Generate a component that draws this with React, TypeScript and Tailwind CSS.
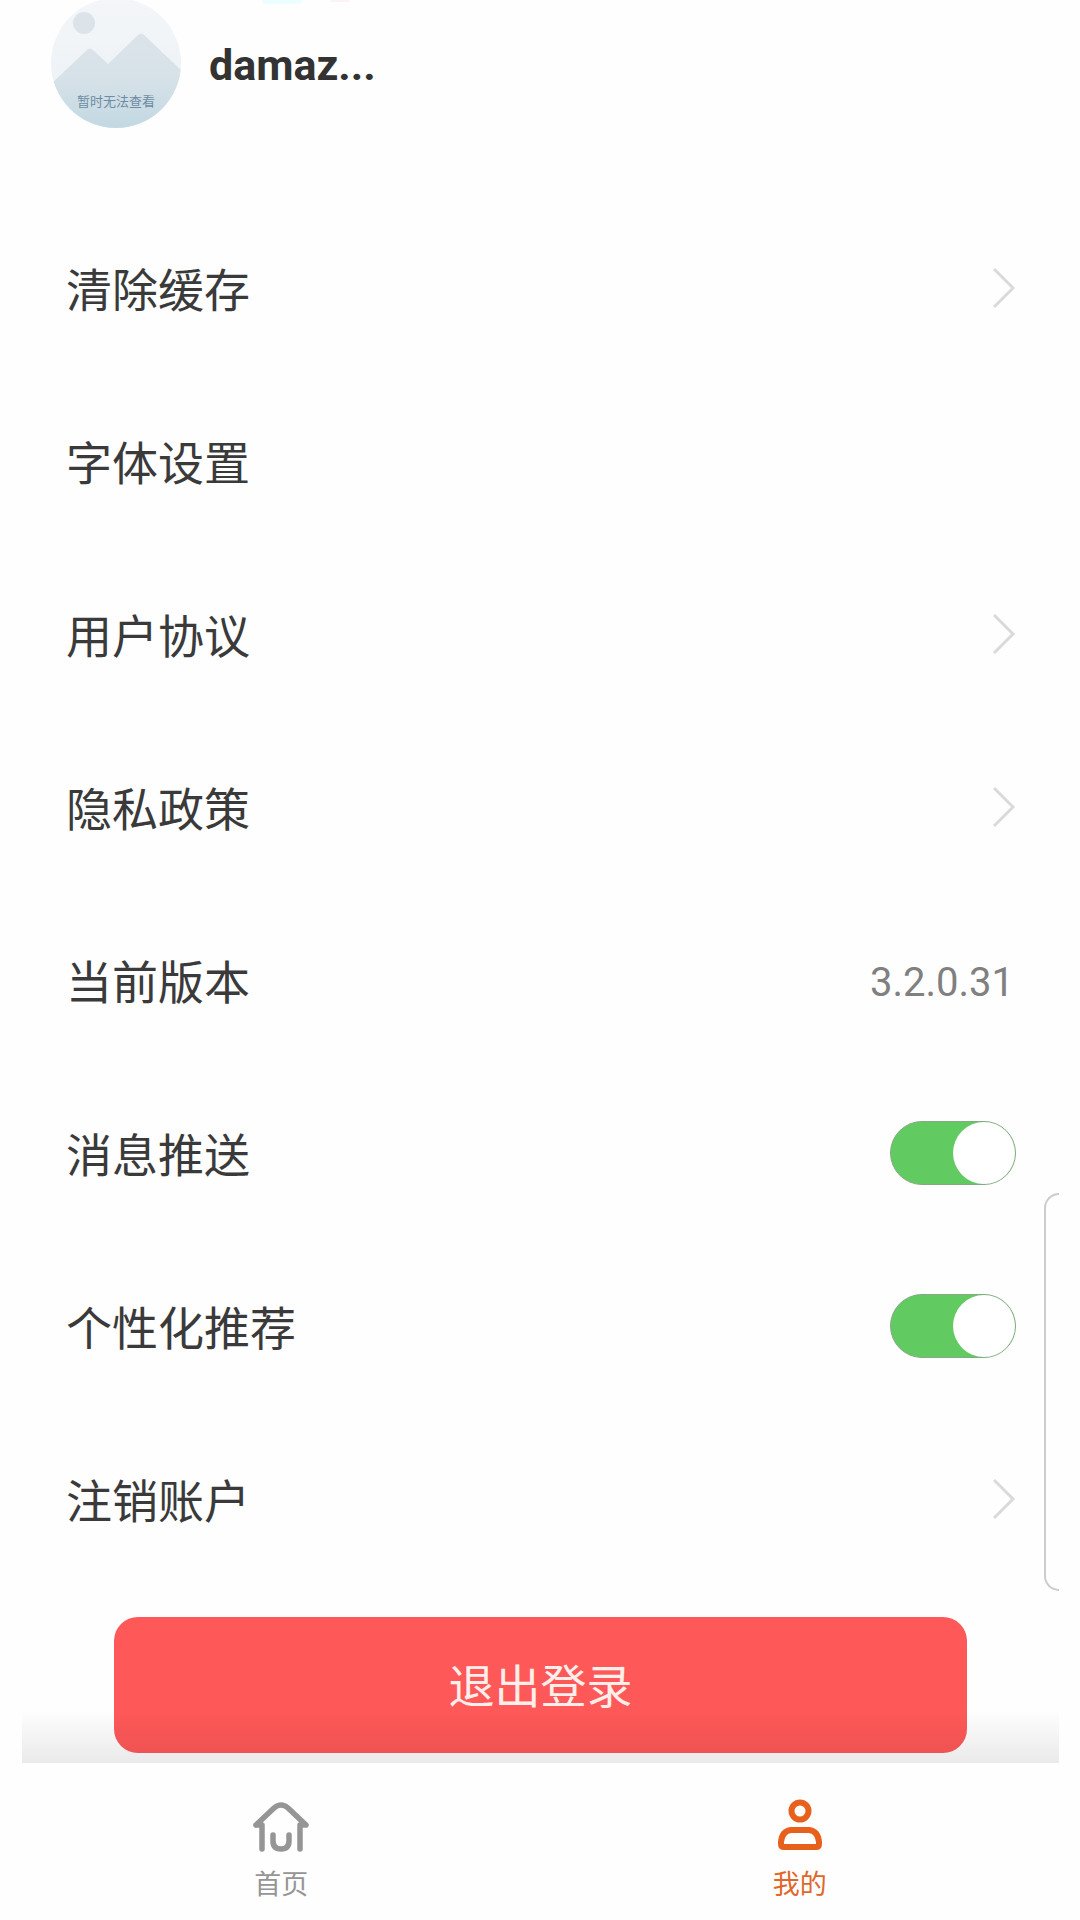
import React, { useState } from 'react';

interface RowProps {
  label: string;
  children?: React.ReactNode;
}

interface SwitchRowProps {
  id: string;
  label: string;
  checked: boolean;
  onChange: (event: React.ChangeEvent<HTMLInputElement>) => void;
}

const rowClass = "flex w-full h-[173px] items-center justify-between text-left text-[46px] leading-[60px] text-[#3a3a3a]";

const Chevron: React.FC = () => (
  <svg className="w-6 h-10" viewBox="0 0 24 40" fill="none" stroke="#dadada" strokeWidth="3" aria-hidden="true">
    <path d="M2 1L21 20L2 39" />
  </svg>
);

const LinkRow: React.FC<RowProps> = ({ label }) => (
  <button type="button" className={rowClass}>
    <span className="pt-1.5">{label}</span>
    <Chevron />
  </button>
);

const InfoRow: React.FC<RowProps> = ({ label, children }) => (
  <div className={rowClass}>
    <span className="pt-1.5">{label}</span>
    {children}
  </div>
);

const SwitchRow: React.FC<SwitchRowProps> = ({ id, label, checked, onChange }) => (
  <div className={rowClass}>
    <label htmlFor={id} className="pt-1.5">{label}</label>
    <input
      id={id}
      type="checkbox"
      role="switch"
      checked={checked}
      onChange={onChange}
      className="flex appearance-none items-center w-[126px] h-16 rounded-full border border-[#86a886] bg-gray-200 checked:bg-[#61cb61] checked:justify-end before:block before:w-[62px] before:h-[62px] before:rounded-full before:bg-white"
    />
  </div>
);

const Avatar: React.FC = () => (
  <div className="relative w-[130px] h-32 shrink-0 overflow-hidden">
    <svg className="w-full h-full" viewBox="0 2 130 128" aria-hidden="true">
      <defs>
        <linearGradient id="sky" x1="0" y1="0" x2="0" y2="1">
          <stop offset="0" stopColor="#f4f6f9" />
          <stop offset="1" stopColor="#eaf1f5" />
        </linearGradient>
        <linearGradient id="hills" x1="0" y1="0" x2="0" y2="1">
          <stop offset="0" stopColor="#dce4ea" />
          <stop offset="0.5" stopColor="#d6e1e8" />
          <stop offset="1" stopColor="#c2d8e2" />
        </linearGradient>
        <clipPath id="round">
          <circle cx="65" cy="65" r="65" />
        </clipPath>
      </defs>
      <g clipPath="url(#round)">
        <rect width="130" height="130" fill="url(#sky)" />
        <circle cx="33" cy="25" r="11" fill="#dce4ea" />
        <path d="M0 86L36 52Q39 49 42 52L57 66L87 37Q90 34 93 37L130 72V130H0Z" fill="url(#hills)" />
      </g>
    </svg>
    <span className="absolute inset-x-0 top-[93px] text-center text-[13px] leading-[18px] text-[#6d8ca3]">暂时无法查看</span>
  </div>
);

const HomeIcon: React.FC = () => (
  <svg className="w-14 h-14" viewBox="0 0 56 56" fill="none" stroke="#959595" strokeWidth="5.5" strokeLinecap="round" strokeLinejoin="round" aria-hidden="true">
    <path d="M3 26L21 9Q28 3 35 9L53 26H47V50M3 26H9V50" />
    <path d="M20 36V42Q20 50 28 50Q36 50 36 42V36" />
  </svg>
);

const UserIcon: React.FC = () => (
  <svg className="w-14 h-14" viewBox="0 0 56 56" fill="none" stroke="#e8611c" strokeWidth="6" strokeLinejoin="round" aria-hidden="true">
    <circle cx="28" cy="12" r="8.5" />
    <path d="M19 31H37Q46 32 47 43V45Q47 48 44 48H12Q9 48 9 45V43Q10 32 19 31Z" />
  </svg>
);

const TabBar: React.FC = () => (
  <nav className="relative grid grid-cols-2 h-[157px] bg-[#fefefe]">
    <div className="absolute inset-x-0 bottom-full h-[53px] pointer-events-none bg-linear-to-t from-black/8 to-transparent" />
    <a href="#home" className="flex flex-col items-center pt-9 text-[27px] leading-9 text-[#959595]">
      <HomeIcon />
      <span className="pt-3">首页</span>
    </a>
    <a href="#mine" className="flex flex-col items-center pt-9 text-[27px] leading-9 text-[#e0672b]">
      <UserIcon />
      <span className="pt-3">我的</span>
    </a>
  </nav>
);

const App: React.FC = () => {
  const [push, setPush] = useState(true);
  const [recommend, setRecommend] = useState(true);

  return (
    <div className="min-h-screen bg-[#fefefe] pl-[22px] pr-[21px] font-[Roboto,'Noto_Sans_CJK_SC',sans-serif]">
      <div className="relative">
        <header className="relative flex h-[201px] items-start gap-7 pl-[29px]">
          <Avatar />
          <h1 className="h-32 text-[43px] leading-[130px] font-bold text-[#333333]">damaz...</h1>
          <div className="absolute left-[240px] top-0 h-1 w-10 rounded-b-full bg-cyan-50" />
          <div className="absolute left-[308px] top-0 h-0.5 w-5 rounded-b-full bg-pink-50" />
        </header>

        <main>
          <div className="pl-11 pr-[43px]">
            <LinkRow label="清除缓存" />
            <InfoRow label="字体设置" />
            <LinkRow label="用户协议" />
            <LinkRow label="隐私政策" />
            <InfoRow label="当前版本">
              <span className="pt-1.5 pr-0.5 text-[40px] text-[#808080]">3.2.0.31</span>
            </InfoRow>
            <SwitchRow id="push" label="消息推送" checked={push} onChange={(e) => setPush(e.target.checked)} />
            <SwitchRow id="recommend" label="个性化推荐" checked={recommend} onChange={(e) => setRecommend(e.target.checked)} />
            <LinkRow label="注销账户" />
          </div>
          <div className="px-[92px] pt-8 pb-[10px]">
            <button type="button" className="w-full h-[136px] rounded-3xl bg-[#ff5858] pt-1 text-[46px] leading-[60px] text-[#ffeeea]">退出登录</button>
          </div>
        </main>

        {/* edge of the floating side panel */}
        <div className="absolute right-0 top-[1193px] h-[398px] w-[15px] rounded-l-[18px] border-2 border-r-0 border-[#cccccc] bg-[#fefefe]" />

        <TabBar />
      </div>
    </div>
  );
};

export default App;
